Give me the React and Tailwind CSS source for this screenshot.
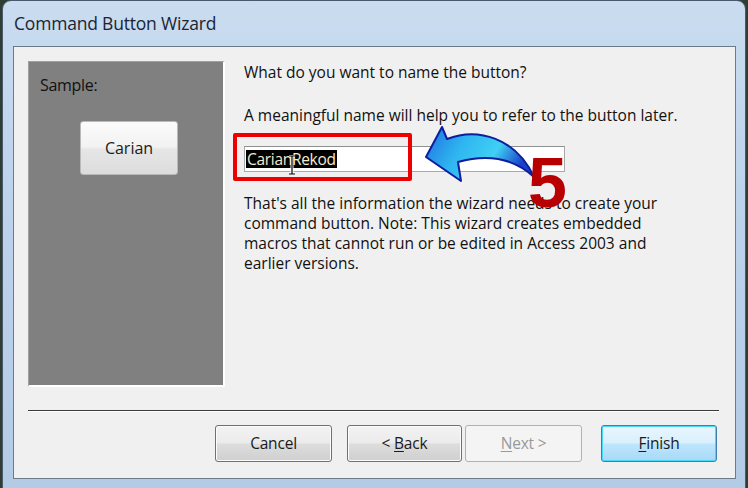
import React from "react";

const font = { fontFamily: '"Open Sans", "Noto Sans", sans-serif' };

function WinButton({ children, className = "", variant = "normal" }) {
  const base =
    "h-[37px] rounded-[3px] flex items-center justify-center text-[15.5px] tracking-[-0.2px]";
  const styles = {
    normal:
      "border border-[#707070] bg-[linear-gradient(#f3f3f3_0%,#ebebeb_48%,#dddddd_52%,#cfcfcf_100%)] text-[#1a1a1a] shadow-[inset_0_0_0_1px_#fcfcfc]",
    disabled:
      "border border-[#adb2b5] bg-[#f4f4f4] text-[#9a9a9a]",
    default:
      "border border-[#3c7fb1] bg-[linear-gradient(#eaf6fd_0%,#d9f0fc_48%,#bee6fd_52%,#a7d9f5_100%)] text-[#1a1a1a] shadow-[inset_0_0_0_1px_#48d8fb]",
  };
  return <div className={`${base} ${styles[variant]} ${className}`}>{children}</div>;
}

export default function App() {
  return (
    <div
      className="relative w-[748px] h-[488px] bg-[#2f3d33] overflow-hidden"
      style={font}
    >
      {/* window */}
      <div className="absolute left-[2px] top-0 w-[744px] h-[490px] rounded-t-[9px] border border-[#4a5a6c] bg-[linear-gradient(180deg,#c9dcf0_0%,#bdd3ec_40%,#b4cbe6_100%)] flex flex-col">
        {/* title bar */}
        <div className="h-[45px] flex items-center pl-[11px] text-[17.5px] text-[#1b2433] tracking-[-0.2px]">
          Command Button Wizard
        </div>
        {/* client area */}
        <div className="ml-[10px] mr-[9px] h-[433px] border border-[#6d7b89] bg-[#f0f0f0] flex flex-col">
          <div className="flex pl-[14px] pt-[14px]">
            {/* sample panel */}
            <div className="w-[197px] h-[326px] bg-[#808080] border-t border-l border-[#a0a0a0] border-r-2 border-b-2 border-r-white border-b-white flex flex-col">
              <div className="pl-[11px] pt-[11px] text-[16px] text-[#111] tracking-[-0.3px]">
                Sample:
              </div>
              <div className="mt-[24px] ml-[51px] w-[98px] h-[54px] rounded-[3px] border border-[#b9b9b9] bg-[linear-gradient(#fbfbfb_0%,#f2f2f2_48%,#e6e6e6_52%,#dcdcdc_100%)] flex items-center justify-center text-[16px] text-[#1a1a1a]">
                Carian
              </div>
            </div>
            {/* right content */}
            <div className="ml-[19px] flex flex-col text-[15.5px] text-[#111] tracking-[0px] leading-[20px]">
              <div className="mt-[1px]">What do you want to name the button?</div>
              <div className="mt-[23px]">A meaningful name will help you to refer to the button later.</div>
              <div className="mt-[21px] w-[321px] h-[26px] border border-[#a9a9a9] border-t-[#8e8f8f] bg-white flex items-center pl-[1px]">
                <span className="bg-black text-[#f3ecd0] leading-[18px] px-[1px] text-[15.5px] tracking-[-0.3px]">
                  CarianRekod
                </span>
              </div>
              <div className="mt-[21px] w-[425px] leading-[20px]">
                That's all the information the wizard needs to create your command button. Note: This wizard creates embedded macros that cannot run or be edited in Access 2003 and earlier versions.
              </div>
            </div>
          </div>
          {/* separator */}
          <div className="mt-[23px] ml-[14px] mr-[16px] h-[2px] bg-[#3a3a3a] border-b border-white" />
          {/* buttons */}
          <div className="mt-[13px] flex pl-[201px]">
            <WinButton className="w-[117px]">Cancel</WinButton>
            <WinButton className="w-[115px] ml-[15px]">
              &lt;&nbsp;<span className="underline underline-offset-2">B</span>ack
            </WinButton>
            <WinButton variant="disabled" className="w-[117px] ml-[3px]">
              <span className="underline underline-offset-2">N</span>ext &gt;
            </WinButton>
            <WinButton variant="default" className="w-[116px] ml-[19px]">
              <span className="underline underline-offset-2">F</span>inish
            </WinButton>
          </div>
        </div>
      </div>

      {/* red highlight box */}
      <div className="absolute left-[233px] top-[133px] w-[179px] h-[48px] border-[4px] border-[#ee0000] rounded-[2px]" />

      {/* I-beam cursor */}
      <svg className="absolute left-[287px] top-[155px] pointer-events-none" width="10" height="20" viewBox="0 0 10 20">
        <path d="M2 1 H8 M5 1 V19 M2 19 H8" stroke="#ffffff" strokeWidth="3" fill="none" />
        <path d="M2 1 H8 M5 1 V19 M2 19 H8" stroke="#000000" strokeWidth="1.2" fill="none" />
      </svg>

      {/* curved arrow */}
      <svg className="absolute left-0 top-0 pointer-events-none" width="748" height="488" viewBox="0 0 748 488">
        <defs>
          <linearGradient id="arrowGrad" x1="0" y1="0" x2="1" y2="0.3">
            <stop offset="0" stopColor="#1f6fe0" />
            <stop offset="0.4" stopColor="#2fb6f0" />
            <stop offset="0.72" stopColor="#3fd0f4" />
            <stop offset="1" stopColor="#1a3fc8" />
          </linearGradient>
        </defs>
        <path
          d="M426,157 L442,127 L447,139 C478,127 516,138 534,177 C512,157 486,154 458,162 L461,181 Z"
          fill="url(#arrowGrad)"
          stroke="#0c1d9e"
          strokeWidth="2"
          strokeLinejoin="round"
        />
      </svg>

      {/* number 5 */}
      <div
        className="absolute left-[528px] top-[146px] text-[70px] leading-[74px] font-bold text-[#b80000]"
        style={{ fontFamily: '"Liberation Sans", Arial, sans-serif' }}
      >
        5
      </div>
    </div>
  );
}
